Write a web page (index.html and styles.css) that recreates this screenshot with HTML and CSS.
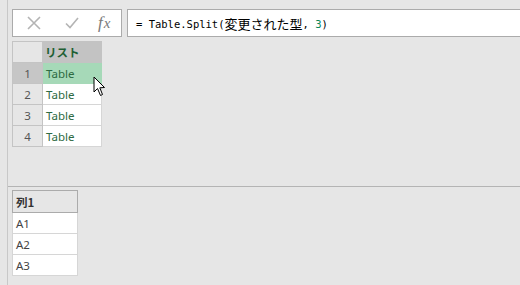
FILE: index.html
```html
<!DOCTYPE html>
<html>
<head>
<meta charset="utf-8">
<link rel="stylesheet" href="styles.css">
</head>
<body>
<div class="app">
  <div class="pane">
    <div class="top">
      <div class="fbar">
        <div class="btns">
          <span class="ico x">
            <svg width="14" height="14" viewBox="0 0 14 14"><path d="M1 1L13 13M13 1L1 13" stroke="#b4b4b4" stroke-width="1.6" fill="none"/></svg>
          </span>
          <span class="ico ok">
            <svg width="14" height="12" viewBox="0 0 14 12"><path d="M1 6.5L5 10.5L13 1" stroke="#b4b4b4" stroke-width="1.6" fill="none"/></svg>
          </span>
          <span class="fx"><i>f</i><i class="xx">x</i></span>
        </div>
        <div class="formula"><span class="mono">= Table.Split(</span><span class="cjk">変更された型</span><span class="mono">, <span class="num">3</span>)</span></div>
      </div>
      <table class="grid">
        <tr><th class="idx"></th><th class="hd">リスト</th></tr>
        <tr class="sel"><td class="idx">1</td><td class="val">Table</td></tr>
        <tr><td class="idx">2</td><td class="val">Table</td></tr>
        <tr><td class="idx">3</td><td class="val">Table</td></tr>
        <tr><td class="idx">4</td><td class="val">Table</td></tr>
      </table>
      <svg class="cursor" width="14" height="21" viewBox="0 0 14 21"><path d="M1 1L1 16L4.5 12.5L7.5 19.5L9.5 18.5L6.8 11.8L11.5 11.5Z" fill="#fff" stroke="#000" stroke-width="1" stroke-linejoin="miter"/></svg>
    </div>
    <div class="bottom">
      <table class="preview">
        <tr><th>列1</th></tr>
        <tr><td>A1</td></tr>
        <tr><td>A2</td></tr>
        <tr><td>A3</td></tr>
      </table>
    </div>
  </div>
</div>
</body>
</html>
```
FILE: styles.css
```css
html, body {
  margin: 0;
  padding: 0;
  background: #e6e6e6;
  width: 520px;
  height: 285px;
  overflow: hidden;
}
.app {
  padding-left: 7px;
  height: 285px;
  box-sizing: border-box;
}
.pane {
  border-left: 1px solid #c8c8c8;
  height: 285px;
  box-sizing: border-box;
}
.top {
  position: relative;
  height: 187px;
  border-bottom: 1px solid #b4b4b4;
  padding-left: 4px;
  padding-top: 9px;
  box-sizing: border-box;
}
.fbar {
  display: flex;
  gap: 5px;
  height: 28px;
}
.btns {
  width: 110px;
  height: 28px;
  box-sizing: border-box;
  border: 1px solid #ababab;
  background: #fff;
  position: relative;
}
.ico {
  display: flex;
  position: absolute;
}
.ico.x { left: 14px; top: 6px; }
.ico.ok { left: 52px; top: 7px; }
.fx {
  position: absolute;
  left: 85px;
  top: 3px;
  font-family: "Liberation Serif", serif;
  font-size: 17px;
  color: #7a7a7a;
  line-height: 20px;
}
.fx .xx { font-size: 15px; margin-left: 1px; }
.formula {
  flex: 1;
  height: 28px;
  box-sizing: border-box;
  border: 1px solid #ababab;
  border-right: none;
  background: #fff;
  display: flex;
  align-items: center;
  padding-left: 8px;
  padding-top: 1px;
  color: #000;
}
.mono {
  font-family: "DejaVu Sans Mono", monospace;
  font-size: 10.5px;
  white-space: pre;
}
.cjk {
  font-family: "Noto Sans CJK JP", sans-serif;
  font-size: 13px;
  line-height: 16px;
}
.num { color: #098658; }
.grid {
  margin-top: 4px;
  border-collapse: collapse;
  font-family: "Noto Sans", "Noto Sans CJK JP", sans-serif;
  font-size: 11.5px;
}
.grid th, .grid td {
  padding: 0;
  height: 20px;
  box-sizing: border-box;
}
.grid .idx {
  width: 30px;
  background: #e6e6e6;
  border: 1px solid #c4c4c4;
  text-align: center;
  color: #555;
}
.grid th.hd {
  width: 59px;
  background: #c3c3c3;
  border: 1px solid #c3c3c3;
  text-align: left;
  padding-left: 2px;
  color: #1e5f33;
  font-weight: bold;
  font-family: "Noto Sans CJK JP", sans-serif;
  font-size: 11.5px;
}
.grid th.idx { height: 21px; }
.grid td.val {
  width: 59px;
  background: #fff;
  border: 1px solid #d6d6d6;
  padding-left: 3px;
  color: #2d6a42;
  height: 21px;
}
.grid .sel td.idx { background: #c6c6c6; }
.grid .sel td.val { background: #a6d9b8; border-color: #a6d9b8; }
.cursor {
  position: absolute;
  left: 85px;
  top: 76px;
}
.bottom {
  padding-left: 4px;
  padding-top: 3px;
}
.preview {
  border-collapse: collapse;
  font-family: "Noto Sans", "Noto Sans CJK JP", sans-serif;
  font-size: 11.5px;
}
.preview th, .preview td {
  width: 65px;
  box-sizing: border-box;
  padding: 0 0 0 3px;
  text-align: left;
  height: 21px;
}
.preview th {
  background: #e6e6e6;
  border: 1px solid #ababab;
  font-weight: bold;
  color: #333;
  height: 22px;
  font-family: "Noto Sans CJK JP", sans-serif;
}
.preview td {
  background: #fff;
  border: 1px solid #d6d6d6;
  color: #444;
}
```
